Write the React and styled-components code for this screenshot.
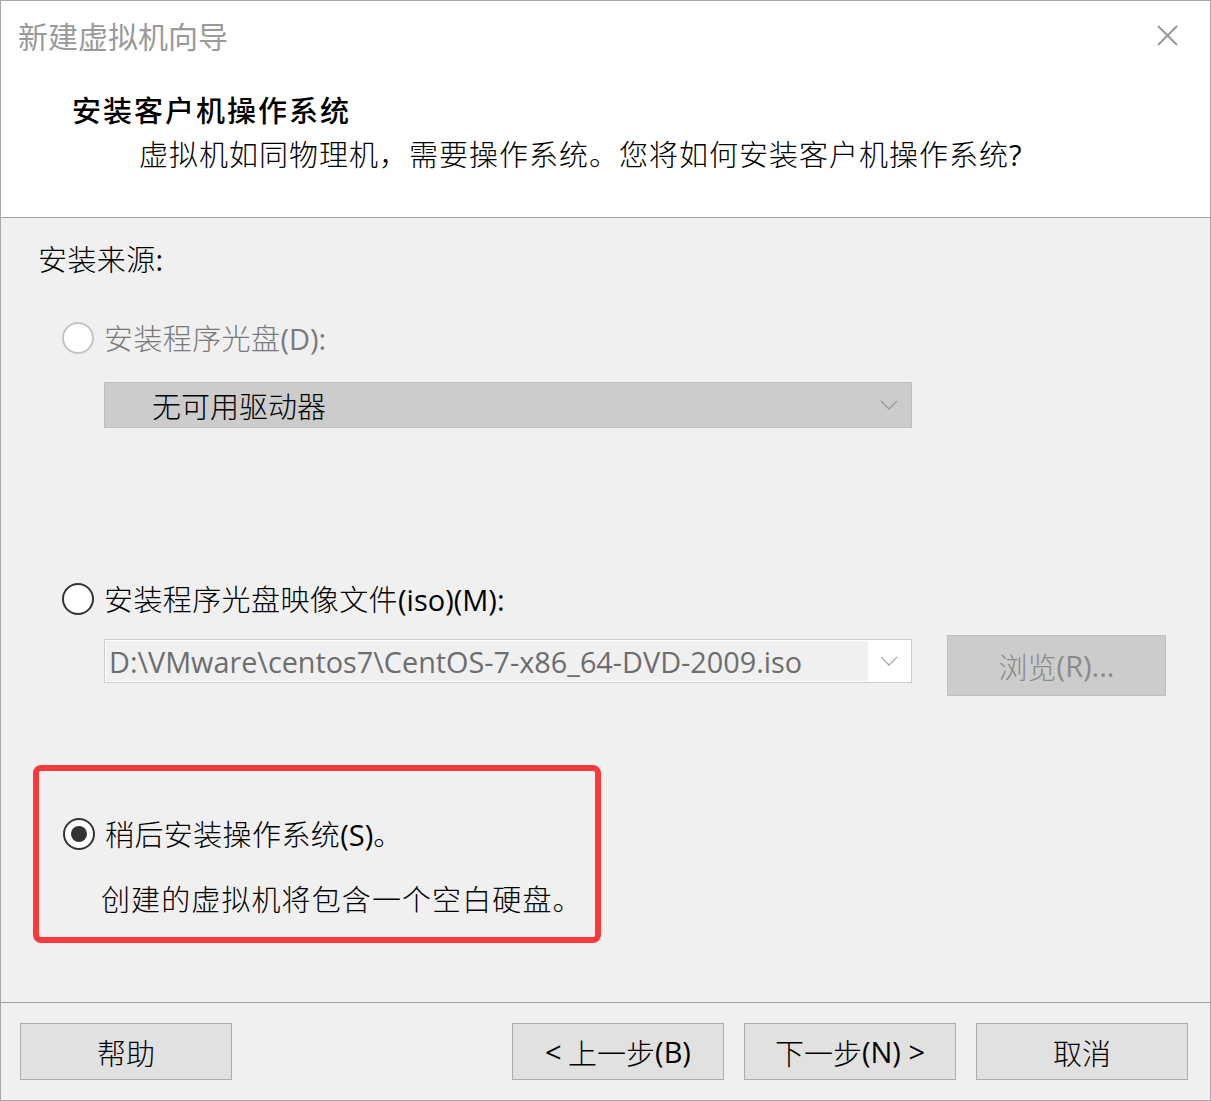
import React from 'react';
import styled, { createGlobalStyle } from 'styled-components';

const Global = createGlobalStyle`
  html, body { margin: 0; padding: 0; background: #ffffff; }
  body {
    font-family: "Noto Sans CJK SC", "Liberation Sans", sans-serif;
    color: #000;
  }
`;

const Window = styled.div`
  width: 1211px;
  height: 1101px;
  box-sizing: border-box;
  border: 1px solid #a8a8a8;
  display: flex;
  flex-direction: column;
  background: #fff;
  overflow: hidden;
`;

const TitleBar = styled.div`
  height: 71px;
  display: flex;
  align-items: center;
  justify-content: space-between;
  padding: 0 32px 0 17px;
  background: #fff;
`;

const Title = styled.div`
  font-size: 30px;
  color: #9a9a9a;
  line-height: 36px;
  margin-top: -3px;
`;

const CloseIcon = styled.svg`
  width: 21px;
  height: 21px;
  margin-top: -2px;
`;

const Header = styled.div`
  height: 146px;
  background: #fff;
  border-bottom: 1px solid #a0a0a0;
  padding: 19px 0 0 71px;
  box-sizing: border-box;
`;

const Heading = styled.div`
  font-size: 29px;
  line-height: 36px;
  font-weight: 500;
  letter-spacing: 2px;
`;

const SubHeading = styled.div`
  font-size: 29px;
  line-height: 36px;
  margin: 8px 0 0 67px;
  font-weight: 300;
  letter-spacing: 1px;
`;

const Body = styled.div`
  flex: 1;
  background: #f0f0f0;
  display: flex;
  flex-direction: column;
  padding: 22px 0 0 37px;
  border-bottom: 1px solid #a0a0a0;
`;

const Label = styled.div`
  font-size: 29px;
  line-height: 36px;
  font-weight: 300;
  color: ${p => (p.$disabled ? '#7a7a7a' : '#000')};
  letter-spacing: 0.4px;
`;

const RadioRow = styled.div`
  display: flex;
  align-items: center;
  gap: 10px;
  height: 40px;
  margin: ${p => p.$mt}px 0 0 24px;
`;

const Radio = styled.span`
  width: 32px;
  height: 32px;
  box-sizing: border-box;
  border-radius: 50%;
  border: 2.5px solid ${p => (p.$disabled ? '#c4c4c4' : '#333')};
  background: #fff;
  display: flex;
  align-items: center;
  justify-content: center;
  &::after {
    content: '';
    display: ${p => (p.$checked ? 'block' : 'none')};
    width: 16px;
    height: 16px;
    border-radius: 50%;
    background: #333;
  }
`;

const FieldRow = styled.div`
  display: flex;
  align-items: flex-start;
  margin: ${p => p.$mt}px 0 0 66px;
`;

const Select = styled.div`
  width: 808px;
  height: ${p => p.$h}px;
  box-sizing: border-box;
  border: 1px solid ${p => (p.$disabled ? '#bcbcbc' : '#cdcdcd')};
  background: ${p => (p.$disabled ? '#cccccc' : '#fff')};
  display: flex;
  align-items: center;
  padding: 1px;
`;

const SelectText = styled.div`
  flex: ${p => (p.$fill ? '0 0 759px' : '1')};
  align-self: stretch;
  display: flex;
  align-items: center;
  background: ${p => (p.$fill ? '#f0f0f0' : 'transparent')};
  padding-left: ${p => p.$pl}px;
  font-size: ${p => (p.$latin ? 28.8 : 29)}px;
  font-family: ${p => (p.$latin ? '"Open Sans", "Liberation Sans", sans-serif' : 'inherit')};
  font-weight: ${p => (p.$latin ? 400 : 300)};
  color: ${p => p.$color};
  white-space: nowrap;
  overflow: hidden;
`;

const Chevron = styled.svg`
  width: 18px;
  height: 10px;
  margin: 0 12px 0 auto;
`;

const Browse = styled.div`
  width: 219px;
  height: 61px;
  box-sizing: border-box;
  margin: -4px 0 0 35px;
  background: #cccccc;
  border: 1px solid #bfbfbf;
  display: flex;
  align-items: center;
  justify-content: center;
  font-size: 29px;
  font-weight: 300;
  color: #8a8a8a;
`;

const Highlight = styled.div`
  width: 568px;
  height: 178px;
  box-sizing: border-box;
  margin: 69px 0 0 -5px;
  border: 6px solid #f93a3a;
  border-radius: 8px;
  padding-top: 43px;
`;

const Note = styled.div`
  font-size: 29px;
  line-height: 36px;
  font-weight: 300;
  margin: 26px 0 0 62px;
  letter-spacing: 1.1px;
`;

const Footer = styled.div`
  height: 97px;
  background: #f0f0f0;
  display: flex;
  align-items: flex-start;
  padding: 20px 0 0 19px;
  box-sizing: border-box;
  gap: 20px;
`;

const Button = styled.div`
  width: 212px;
  height: 57px;
  box-sizing: border-box;
  background: #e1e1e1;
  border: 1px solid #adadad;
  display: flex;
  align-items: center;
  justify-content: center;
  font-size: 29px;
  font-weight: 300;
  margin-left: ${p => p.$ml || 0}px;
`;

const Latin = styled.span`
  font-family: "Open Sans", "Liberation Sans", sans-serif;
  font-weight: 400;
  letter-spacing: 0;
`;

const Down = ({ color }) => (
  <Chevron viewBox="0 0 18 10">
    <path d="M1 1 L9 9 L17 1" fill="none" stroke={color} strokeWidth="1.3" />
  </Chevron>
);

export default function App() {
  return (
    <>
      <Global />
      <Window>
        <TitleBar>
          <Title>新建虚拟机向导</Title>
          <CloseIcon viewBox="0 0 21 21">
            <path d="M1 1 L20 20 M20 1 L1 20" stroke="#999" strokeWidth="2" />
          </CloseIcon>
        </TitleBar>
        <Header>
          <Heading>安装客户机操作系统</Heading>
          <SubHeading>虚拟机如同物理机，需要操作系统。您将如何安装客户机操作系统<Latin>?</Latin></SubHeading>
        </Header>
        <Body>
          <Label>安装来源<Latin>:</Latin></Label>
          <RadioRow $mt={40}>
            <Radio $disabled />
            <Label $disabled>安装程序光盘<Latin>(D):</Latin></Label>
          </RadioRow>
          <FieldRow $mt={24}>
            <Select $disabled $h={46}>
              <SelectText $pl={46} $color="#000">无可用驱动器</SelectText>
              <Down color="#999" />
            </Select>
          </FieldRow>
          <RadioRow $mt={151}>
            <Radio />
            <Label>安装程序光盘映像文件<Latin>(iso)(M):</Latin></Label>
          </RadioRow>
          <FieldRow $mt={20}>
            <Select $h={44}>
              <SelectText $fill $latin $pl={3} $color="#6d6d6d">D:\VMware\centos7\CentOS-7-x86_64-DVD-2009.iso</SelectText>
              <Down color="#aaa" />
            </Select>
            <Browse>浏览<Latin>(R)...</Latin></Browse>
          </FieldRow>
          <Highlight>
            <RadioRow $mt={0}>
              <Radio $checked />
              <Label>稍后安装操作系统<Latin>(S)</Latin>。</Label>
            </RadioRow>
            <Note>创建的虚拟机将包含一个空白硬盘。</Note>
          </Highlight>
        </Body>
        <Footer>
          <Button>帮助</Button>
          <Button $ml={260}><Latin>&lt;</Latin>&nbsp;上一步<Latin>(B)</Latin></Button>
          <Button>下一步<Latin>(N) &gt;</Latin></Button>
          <Button>取消</Button>
        </Footer>
      </Window>
    </>
  );
}
